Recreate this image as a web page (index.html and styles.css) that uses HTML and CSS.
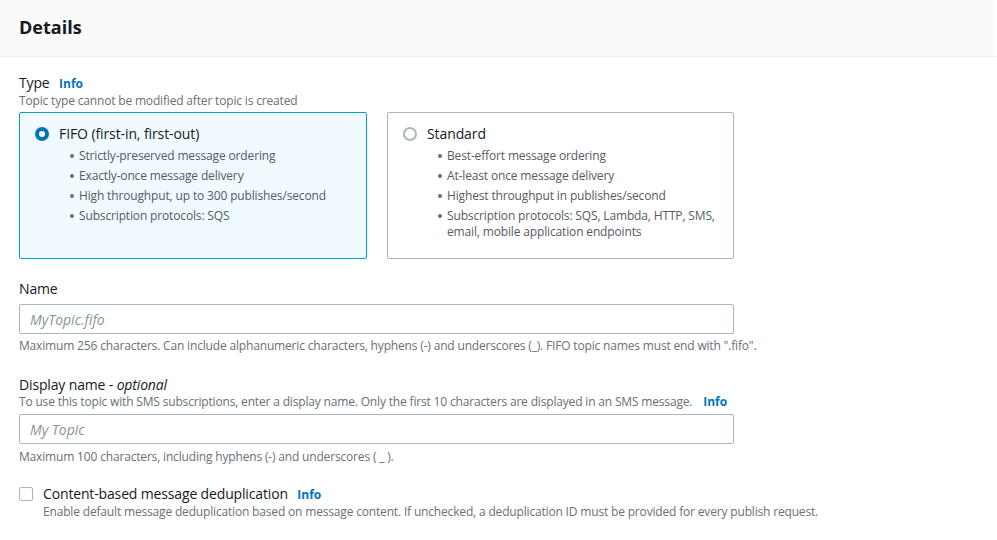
FILE: index.html
```html
<!DOCTYPE html>
<html>
<head>
<meta charset="utf-8">
<link rel="stylesheet" href="styles.css">
</head>
<body>
<div class="panel">
  <div class="panel-header"><h2>Details</h2></div>
  <div class="panel-body">
    <div class="field">
      <div class="label">Type <a class="info">Info</a></div>
      <div class="desc">Topic type cannot be modified after topic is created</div>
      <div class="tiles">
        <div class="tile selected">
          <div class="tile-title"><span class="radio checked"></span>FIFO (first-in, first-out)</div>
          <ul>
            <li>Strictly-preserved message ordering</li>
            <li>Exactly-once message delivery</li>
            <li>High throughput, up to 300 publishes/second</li>
            <li>Subscription protocols: SQS</li>
          </ul>
        </div>
        <div class="tile">
          <div class="tile-title"><span class="radio"></span>Standard</div>
          <ul>
            <li>Best-effort message ordering</li>
            <li>At-least once message delivery</li>
            <li>Highest throughput in publishes/second</li>
            <li>Subscription protocols: SQS, Lambda, HTTP, SMS, email, mobile application endpoints</li>
          </ul>
        </div>
      </div>
    </div>

    <div class="field field-name">
      <div class="label">Name</div>
      <div class="input"><span class="placeholder">MyTopic.fifo</span></div>
      <div class="help">Maximum 256 characters. Can include alphanumeric characters, hyphens (-) and underscores (_). FIFO topic names must end with ".fifo".</div>
    </div>

    <div class="field field-display">
      <div class="label">Display name - <i>optional</i></div>
      <div class="desc">To use this topic with SMS subscriptions, enter a display name. Only the first 10 characters are displayed in an SMS message. <a class="info">Info</a></div>
      <div class="input"><span class="placeholder">My Topic</span></div>
      <div class="help">Maximum 100 characters, including hyphens (-) and underscores ( _ ).</div>
    </div>

    <div class="field check-field">
      <span class="checkbox"></span>
      <div>
        <div class="label">Content-based message deduplication <a class="info">Info</a></div>
        <div class="desc">Enable default message deduplication based on message content. If unchecked, a deduplication ID must be provided for every publish request.</div>
      </div>
    </div>
  </div>
</div>
</body>
</html>
```

FILE: styles.css
```css
* { box-sizing: border-box; }
body {
  margin: 0;
  font-family: "Open Sans", "Noto Sans", sans-serif;
  font-size: 14px;
  color: #16191f;
  background: #fff;
}
.panel { width: 996px; }
.panel-header {
  height: 57px;
  background: #fafafa;
  border-bottom: 1px solid #eaeded;
  padding: 0 19px;
  display: flex;
  align-items: center;
}
.panel-header h2 {
  margin: 0;
  font-size: 18px;
  font-weight: 700;
  line-height: 22px;
  padding-bottom: 2px;
}
.panel-body {
  padding: 17px 19px 0;
}
.field { margin-bottom: 21px; }
.field-name { margin-bottom: 22px; }
.field-display { margin-bottom: 20px; }
.label {
  font-size: 14px;
  line-height: 18px;
  letter-spacing: -0.15px;
}
.label i { font-style: italic; }
.info {
  color: #0073bb;
  font-weight: 700;
  font-size: 12px;
  margin-left: 6px;
  letter-spacing: 0;
}
.desc .info { margin-left: 8px; }
.desc, .help {
  font-size: 12px;
  line-height: 16px;
  color: #687078;
  letter-spacing: -0.17px;
}
.tiles {
  display: grid;
  grid-template-columns: 348px 347px;
  gap: 20px;
  margin-top: 3px;
}
.tile {
  height: 147px;
  border: 1px solid #aab7b8;
  border-radius: 2px;
  padding: 11px 15px 10px;
}
.tile.selected {
  border-color: #00a1c9;
  background: #f1faff;
}
.tile-title {
  display: flex;
  align-items: center;
  line-height: 20px;
  font-size: 14px;
  letter-spacing: -0.1px;
}
.radio {
  width: 14px;
  height: 14px;
  border-radius: 50%;
  border: 2px solid #aab7b8;
  margin-right: 10px;
  background: #fff;
  flex: none;
}
.radio.checked {
  border: 4px solid #0073bb;
}
.tile ul {
  margin: 4px 0 0;
  padding-left: 44px;
  font-size: 12px;
  line-height: 16px;
  color: #545b64;
  list-style: none;
  letter-spacing: -0.15px;
}
.tile li {
  position: relative;
  margin-bottom: 4px;
}
.tile li::before {
  content: "";
  position: absolute;
  left: -9px;
  top: 6px;
  width: 4px;
  height: 4px;
  border-radius: 50%;
  background: #687078;
}
.input {
  width: 715px;
  margin-top: 6px;
  height: 30px;
  border: 1px solid #aab7b8;
  border-radius: 2px;
  padding: 0 10px;
  display: flex;
  align-items: center;
  font-size: 14px;
}
.placeholder {
  color: #879596;
  font-style: italic;
}
.help { margin-top: 4px; }
.desc + .input { margin-top: 4px; }
.field-display .help { margin-top: 5px; }
.check-field {
  display: flex;
  gap: 10px;
}
.checkbox {
  width: 14px;
  height: 14px;
  margin-top: 2px;
  border: 1px solid #aab7b8;
  border-radius: 2px;
  flex: none;
}
```
